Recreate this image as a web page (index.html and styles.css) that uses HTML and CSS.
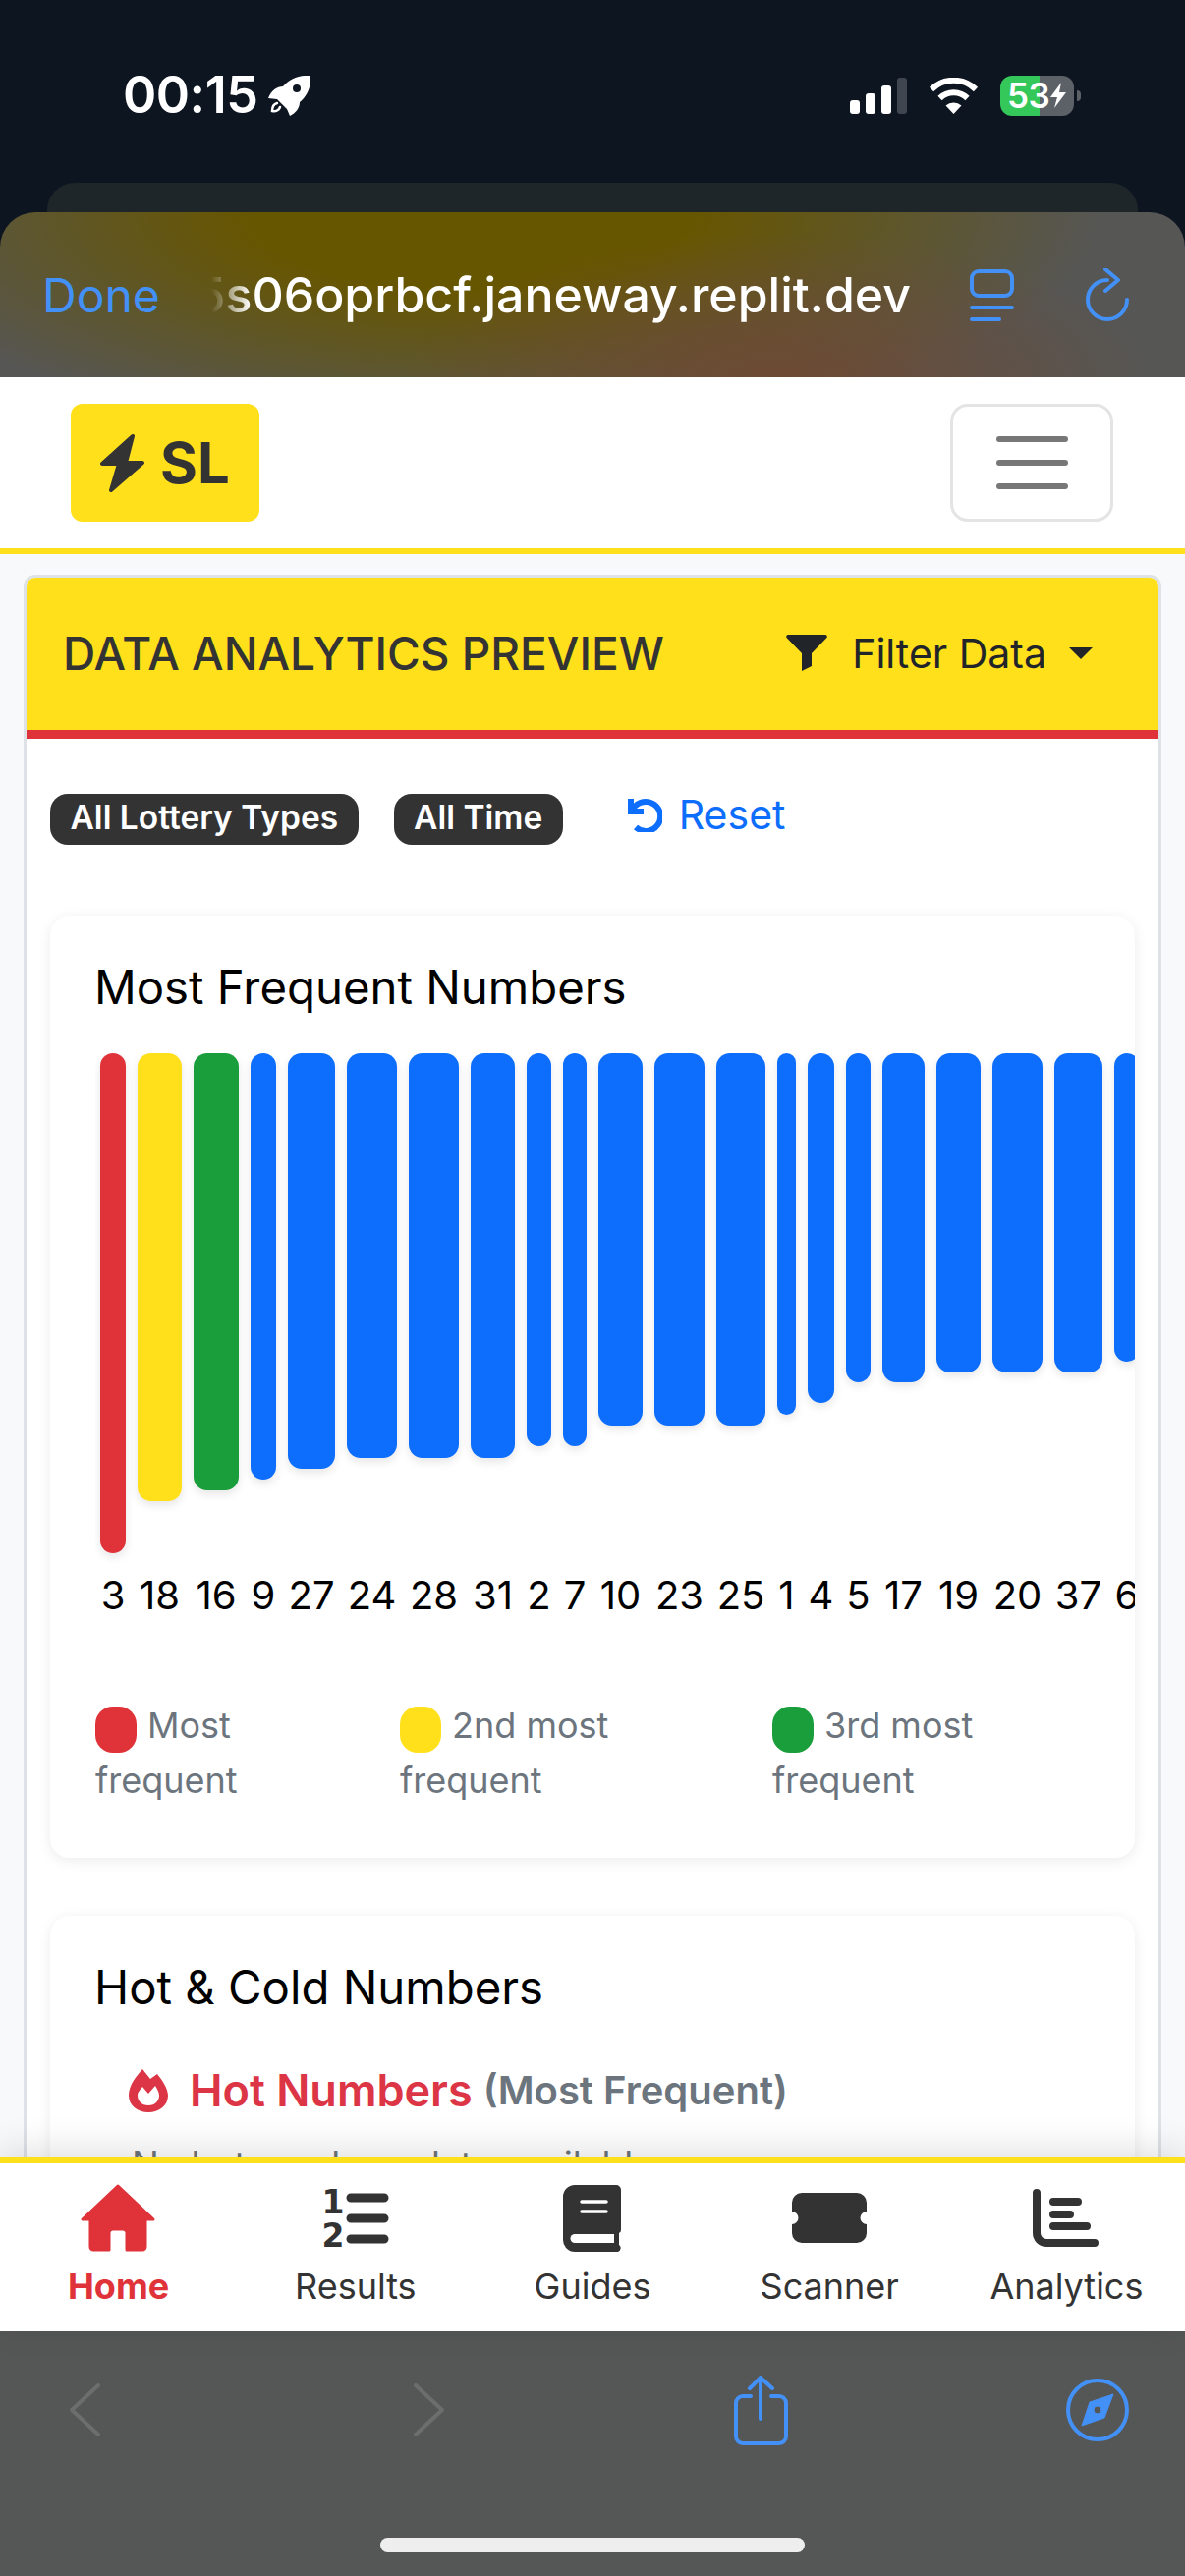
FILE: index.html
```html
<!DOCTYPE html>
<html lang="en">
<head>
    <meta charset="UTF-8">
    <meta name="viewport" content="width=device-width, initial-scale=1.0">
    <title>SL - Data Analytics Preview</title>
    <link rel="stylesheet" href="styles.css">
</head>
<body>

<!-- iOS status bar -->
<div class="status-bar">
    <div class="status-left">
        <span class="clock">00:15</span>
        <svg class="rocket" viewBox="0 0 43 41"><path fill-rule="evenodd" fill="#fff" d="M43 0C31-1 22 3 15 11 9 11 3 15 0 23L9 24 19 34 22 41C28 38 32 33 32 27 40 20 44 11 43 0ZM29 9a4 4 0 1 1 0 8 4 4 0 0 1 0-8Z"/><path fill="none" stroke="#fff" stroke-width="2.500" stroke-linecap="round" d="M9 28C5 29 4 32 4 36 8 37 11 35 12 32"/></svg>
    </div>
    <div class="status-right">
        <svg class="signal" viewBox="0 0 58 37">
            <rect x="0" y="23" width="10" height="14" rx="3" fill="#fff"/>
            <rect x="16" y="16" width="10" height="21" rx="3" fill="#fff"/>
            <rect x="32" y="8" width="10" height="29" rx="3" fill="#fff"/>
            <rect x="48" y="0" width="10" height="37" rx="3" fill="#3f464f"/>
        </svg>
        <svg class="wifi" viewBox="0 0 51 37">
            <path fill="none" stroke="#fff" stroke-width="6" d="M3 12A32 32 0 0 1 48 12M11.500 21A20 20 0 0 1 39.500 21"/>
            <path fill="#fff" d="M25.500 37 17.500 28.500A12 12 0 0 1 33.500 28.500Z"/>
        </svg>
        <div class="battery">
            <span>53</span>
            <svg class="battery-bolt" viewBox="0 0 16 26"><path fill="#fff" d="M11 0 0 15H7L4 26 16 10H9Z"/></svg>
        </div>
        <span class="battery-nub"></span>
    </div>
</div>
<div class="back-sheet"></div>

<!-- Safari sheet header -->
<div class="sheet-head">
    <span class="done">Done</span>
    <div class="url"><span>5s06oprbcf.janeway.replit.dev</span></div>
    <svg class="tabs-icon" viewBox="0 0 45 53">
        <rect x="2" y="2" width="41" height="25" rx="7" fill="none" stroke="#4390f7" stroke-width="4"/>
        <rect x="0" y="37" width="45" height="4" rx="2" fill="#4390f7"/>
        <rect x="0" y="49" width="32" height="4" rx="2" fill="#4390f7"/>
    </svg>
    <svg class="reload-icon" viewBox="0 0 44 54">
        <path fill="none" stroke="#4390f7" stroke-width="4" stroke-linecap="round" stroke-linejoin="round" d="M42 32A20 20 0 1 1 22 12M20 1 33 12 20 23"/>
    </svg>
</div>

<!-- site navbar -->
<nav class="navbar">
    <div class="logo">
        <svg class="logo-bolt" viewBox="0 0 45 61"><path fill="#333" stroke="#333" stroke-width="4" stroke-linejoin="round" d="M33 3 2 31H19L11 58 43 30H26Z"/></svg>
        <span>SL</span>
    </div>
    <div class="toggler">
        <i></i><i></i><i></i>
    </div>
</nav>

<main class="page">
    <section class="panel">
        <div class="panel-head">
            <h1>DATA ANALYTICS PREVIEW</h1>
            <div class="filter-btn">
                <svg class="funnel" viewBox="0 0 42 37"><path fill="#212529" d="M2 0H40A2 2 0 0 1 41.500 3L26 19V32L16 37V19L.5 3A2 2 0 0 1 2 0Z"/></svg>
                <span>Filter Data</span>
                <i class="caret"></i>
            </div>
        </div>
        <div class="panel-body">
            <div class="filters">
                <span class="badge">All Lottery Types</span>
                <span class="badge">All Time</span>
                <a class="reset">
                    <svg class="reset-icon" viewBox="0 0 37 36"><path fill="none" stroke="#0d6efd" stroke-width="6" d="M5 2V15H18M6 15A15 15 0 1 1 10 31"/></svg>
                    Reset
                </a>
            </div>

            <div class="card">
                <h2>Most Frequent Numbers</h2>
                <div class="chart">
                    <div class="col" style="width:26px"><div class="track"><div class="bar red" style="height:509px"></div></div><span>3</span></div>
                    <div class="col" style="width:45px"><div class="track"><div class="bar yellow" style="height:456px"></div></div><span>18</span></div>
                    <div class="col" style="width:46px"><div class="track"><div class="bar green" style="height:445px"></div></div><span>16</span></div>
                    <div class="col" style="width:26px"><div class="track"><div class="bar" style="height:434px"></div></div><span>9</span></div>
                    <div class="col" style="width:48px"><div class="track"><div class="bar" style="height:423px"></div></div><span>27</span></div>
                    <div class="col" style="width:51px"><div class="track"><div class="bar" style="height:412px"></div></div><span>24</span></div>
                    <div class="col" style="width:51px"><div class="track"><div class="bar" style="height:412px"></div></div><span>28</span></div>
                    <div class="col" style="width:45px"><div class="track"><div class="bar" style="height:412px"></div></div><span>31</span></div>
                    <div class="col" style="width:25px"><div class="track"><div class="bar" style="height:400px"></div></div><span>2</span></div>
                    <div class="col" style="width:24px"><div class="track"><div class="bar" style="height:400px"></div></div><span>7</span></div>
                    <div class="col" style="width:45px"><div class="track"><div class="bar" style="height:379px"></div></div><span>10</span></div>
                    <div class="col" style="width:51px"><div class="track"><div class="bar" style="height:379px"></div></div><span>23</span></div>
                    <div class="col" style="width:50px"><div class="track"><div class="bar" style="height:379px"></div></div><span>25</span></div>
                    <div class="col" style="width:19px"><div class="track"><div class="bar" style="height:368px"></div></div><span>1</span></div>
                    <div class="col" style="width:27px"><div class="track"><div class="bar" style="height:356px"></div></div><span>4</span></div>
                    <div class="col" style="width:25px"><div class="track"><div class="bar" style="height:335px"></div></div><span>5</span></div>
                    <div class="col" style="width:43px"><div class="track"><div class="bar" style="height:335px"></div></div><span>17</span></div>
                    <div class="col" style="width:45px"><div class="track"><div class="bar" style="height:325px"></div></div><span>19</span></div>
                    <div class="col" style="width:51px"><div class="track"><div class="bar" style="height:325px"></div></div><span>20</span></div>
                    <div class="col" style="width:49px"><div class="track"><div class="bar" style="height:325px"></div></div><span>37</span></div>
                    <div class="col" style="width:26px"><div class="track"><div class="bar" style="height:314px"></div></div><span>6</span></div>
                </div>
                <div class="legend">
                    <div><i class="dot red"></i>Most<br>frequent</div>
                    <div><i class="dot yellow"></i>2nd most<br>frequent</div>
                    <div><i class="dot green"></i>3rd most<br>frequent</div>
                </div>
            </div>

            <div class="card card-hot">
                <h2>Hot &amp; Cold Numbers</h2>
                <div class="hot-head">
                    <svg class="flame" viewBox="0 0 40 44"><path fill="#dc3545" fill-rule="evenodd" d="M14 0 22 10 29 5C34 11 40 20 40 27 40 37 31 44 20 44 9 44 0 37 0 27 0 16 8 7 14 0ZM20 37C27 37 31 32 31 27 31 24 29 20 27 17L20 25 14 18C12 21 9 23 9 27 9 32 13 37 20 37Z"/></svg>
                    <strong>Hot Numbers</strong>
                    <small>(Most Frequent)</small>
                </div>
                <p class="empty">No hot numbers data available</p>
            </div>
        </div>
    </section>
</main>

<!-- bottom tabs of the site -->
<nav class="tabbar">
    <a class="tab active">
        <svg viewBox="0 0 80 70"><path fill="#e03239" stroke="#e03239" stroke-width="3" stroke-linejoin="round" d="M39 2 3 36H11V64A3 3 0 0 0 14 67H30V50A4 4 0 0 1 34 46H44A4 4 0 0 1 48 50V67H64A3 3 0 0 0 67 64V36H75Z"/></svg>
        <span>Home</span>
    </a>
    <a class="tab">
        <svg viewBox="0 0 80 70">
            <text class="ol-num" x="17" y="30">1</text>
            <text class="ol-num" x="17" y="64">2</text>
            <path fill="none" stroke="#333" stroke-width="9" stroke-linecap="round" d="M35 14H69M35 35H69M35 56H69"/>
        </svg>
        <span>Results</span>
    </a>
    <a class="tab">
        <svg viewBox="0 0 80 70">
            <path fill="#333" d="M22 1H64A5 5 0 0 1 69 6V46A4 4 0 0 1 67 50V62A4 4 0 0 1 66 69H22A12 12 0 0 1 10 57V13A12 12 0 0 1 22 1Z"/>
            <path fill="#fff" d="M22 51H62V60H22A4.500 4.500 0 0 1 22 51Z"/>
            <path stroke="#fff" stroke-width="3.500" stroke-linecap="round" d="M29 18H54M29 28H54"/>
        </svg>
        <span>Guides</span>
    </a>
    <a class="tab">
        <svg viewBox="0 0 80 70"><path fill="#333" d="M12 9H68A10 10 0 0 1 78 19V28A6.500 6.500 0 0 0 78 41V50A10 10 0 0 1 68 60H12A10 10 0 0 1 2 50V41A6.500 6.500 0 0 0 2 28V19A10 10 0 0 1 12 9Z"/></svg>
        <span>Scanner</span>
    </a>
    <a class="tab">
        <svg viewBox="0 0 80 70"><path fill="none" stroke="#333" stroke-width="8" stroke-linecap="round" d="M10 9V50A10 10 0 0 0 20 60H69M27 18H52M27 31H44M27 43H61"/></svg>
        <span>Analytics</span>
    </a>
</nav>

<!-- Safari toolbar -->
<div class="toolbar">
    <div class="toolbar-row">
        <svg class="chev" viewBox="0 0 31 54"><path fill="none" stroke="#6c6e6d" stroke-width="4" stroke-linecap="round" stroke-linejoin="round" d="M29 2 2 27 29 52"/></svg>
        <svg class="chev chev-next" viewBox="0 0 31 54"><path fill="none" stroke="#6c6e6d" stroke-width="4" stroke-linecap="round" stroke-linejoin="round" d="M2 2 29 27 2 52"/></svg>
        <svg class="share" viewBox="0 0 55 71"><path fill="none" stroke="#4390f7" stroke-width="4" stroke-linecap="round" stroke-linejoin="round" d="M17 21H9A7 7 0 0 0 2 28V62A7 7 0 0 0 9 69H46A7 7 0 0 0 53 62V28A7 7 0 0 0 46 21H38M27 44V2M16 13 27 2 39 13"/></svg>
        <svg class="compass" viewBox="0 0 64 64">
            <circle cx="32" cy="32" r="30" fill="none" stroke="#4390f7" stroke-width="4"/>
            <path fill="#4390f7" fill-rule="evenodd" stroke="#4390f7" stroke-linejoin="round" d="M48 16 39 40 16 48 24 24ZM32 28a4 4 0 1 0 0 8 4 4 0 0 0 0-8Z"/>
        </svg>
    </div>
    <div class="home-bar"></div>
</div>

</body>
</html>
```

FILE: styles.css
```css
* {
    box-sizing: border-box;
}

body {
    margin: 0;
    width: 1206px;
    height: 2622px;
    overflow: hidden;
    display: flex;
    flex-direction: column;
    background-color: #0d1521;
    font-family: Inter, "Noto Sans", sans-serif;
    color: #000;
}

/* status bar */
.status-bar {
    height: 186px;
    padding: 76px 106px 0 125px;
    display: flex;
    justify-content: space-between;
    align-items: flex-start;
}

.status-left,
.status-right {
    display: flex;
    align-items: center;
    height: 42px;
}

.clock {
    color: #fff;
    font-size: 52px;
    font-weight: 600;
    letter-spacing: -0.5px;
    line-height: 42px;
}

.rocket {
    width: 43px;
    height: 41px;
    margin-left: 11px;
}

.signal {
    width: 58px;
    height: 37px;
}

.wifi {
    width: 51px;
    height: 37px;
    margin-left: 22px;
}

.battery {
    width: 75px;
    height: 41px;
    margin-left: 22px;
    padding-left: 7px;
    border-radius: 12px;
    background: linear-gradient(90deg, #34c759 40px, #5c6168 40px);
    display: flex;
    align-items: center;
    color: #fff;
    font-size: 35px;
    font-weight: 600;
    letter-spacing: -0.5px;
}

.battery-bolt {
    width: 16px;
    height: 26px;
    margin-left: 1px;
}

.battery-nub {
    width: 4px;
    height: 11px;
    margin-left: 3px;
    border-radius: 0 4px 4px 0;
    background: #5c6168;
}

.back-sheet {
    height: 30px;
    margin: 0 48px;
    background: #1e2629;
    border-radius: 28px 28px 0 0;
}

/* safari head */
.sheet-head {
    height: 168px;
    border-radius: 36px 36px 0 0;
    padding-left: 43px;
    display: flex;
    align-items: center;
    background:
        radial-gradient(ellipse 380px 150px at 790px 170px, #6e4a33, rgba(110, 74, 51, 0) 100%),
        radial-gradient(ellipse 640px 230px at 480px 0, #675600 35%, rgba(103, 86, 0, 0) 100%),
        #565654;
    color: #fff;
    font-size: 50px;
}

.done {
    width: 172px;
    color: #4390f7;
    font-size: 48px;
}

.url {
    width: 712px;
    overflow: hidden;
    display: flex;
    justify-content: flex-end;
    font-weight: 500;
    white-space: nowrap;
    -webkit-mask-image: linear-gradient(90deg, transparent 0, #000 40px);
    mask-image: linear-gradient(90deg, transparent 0, #000 40px);
}

.tabs-icon {
    width: 45px;
    height: 53px;
    margin-left: 60px;
}

.reload-icon {
    width: 44px;
    height: 54px;
    margin-left: 73px;
}

/* navbar */
.navbar {
    height: 180px;
    padding: 27px 73px 0 72px;
    background: #fff;
    border-bottom: 6px solid #ffe01b;
    display: flex;
    justify-content: space-between;
    align-items: flex-start;
}

.logo {
    width: 192px;
    height: 120px;
    padding-left: 30px;
    border-radius: 12px;
    background: #ffe01b;
    display: flex;
    align-items: center;
    color: #333;
    font-size: 58px;
    font-weight: 700;
}

.logo-bolt {
    width: 45px;
    height: 61px;
    margin-right: 16px;
}

.toggler {
    width: 166px;
    height: 120px;
    border: 3px solid #e4e4e4;
    border-radius: 18px;
    display: flex;
    flex-direction: column;
    align-items: center;
    justify-content: center;
    gap: 18px;
}

.toggler i {
    width: 73px;
    height: 6px;
    border-radius: 3px;
    background: #777;
}

/* page */
.page {
    height: 1632px;
    padding: 21px 24px 0;
    background: #f8f9fa;
    overflow: hidden;
}

.panel {
    background: #fff;
    border: 3px solid #dee2e6;
    border-radius: 12px;
}

.panel-head {
    height: 164px;
    padding: 0 67px 2px 37px;
    background: #ffe01b;
    border-bottom: 9px solid #e03239;
    border-radius: 9px 9px 0 0;
    display: flex;
    align-items: center;
    justify-content: space-between;
}

.panel-head h1 {
    margin: 0;
    font-size: 46px;
    font-weight: 500;
    color: #333;
}

.filter-btn {
    display: flex;
    align-items: center;
    font-size: 41px;
    color: #212529;
}

.funnel {
    width: 42px;
    height: 37px;
    margin-right: 25px;
}

.caret {
    width: 0;
    height: 0;
    margin-left: 23px;
    border-top: 12px solid #212529;
    border-left: 12px solid transparent;
    border-right: 12px solid transparent;
}

.panel-body {
    padding: 56px 24px 0;
}

.filters {
    display: flex;
    align-items: flex-start;
    gap: 36px;
    margin-bottom: 72px;
}

.badge {
    height: 52px;
    padding: 0 20.500px;
    border-radius: 18px;
    background: #333;
    color: #fff;
    font-size: 33.500px;
    font-weight: 600;
    line-height: 48px;
}

.reset {
    display: flex;
    align-items: center;
    margin-left: 28px;
    color: #0d6efd;
    font-size: 41px;
    line-height: 42px;
}

.reset-icon {
    width: 37px;
    height: 36px;
    margin-right: 17px;
}

.card {
    height: 959px;
    padding: 45px 46px 0;
    background: #fff;
    border-radius: 20px;
    box-shadow: 0 3px 14px rgba(0, 0, 0, 0.08);
}

.card h2 {
    margin: 0 0 0 -1px;
    font-size: 47.300px;
    font-weight: 400;
    line-height: 55px;
}

.chart {
    display: flex;
    gap: 12px;
    margin: 40px -46px 0 0;
    padding-left: 5px;
    overflow: hidden;
    padding-bottom: 10px;
}

.col {
    flex: none;
    font-size: 40px;
    line-height: 48px;
    text-align: center;
}

.track {
    height: 509px;
    margin-bottom: 19px;
}

.bar {
    width: 100%;
    border-radius: 14px;
    background: #0d6efd;
    box-shadow: 0 4px 10px rgba(0, 0, 0, 0.1);
}

.red {
    background: #e03239;
}

.yellow {
    background: #ffe01b;
}

.green {
    background: #1a9e3c;
}

.legend {
    display: grid;
    grid-template-columns: 310px 379px 1fr;
    margin-top: 70px;
    color: #6c757d;
    font-size: 36px;
    line-height: 56px;
}

.dot {
    display: inline-block;
    width: 42px;
    height: 47px;
    margin-right: 11px;
    border-radius: 18px;
    vertical-align: -15px;
}

.card-hot {
    margin-top: 59px;
}

.hot-head {
    display: flex;
    align-items: center;
    margin: 50px 0 0 34px;
    font-size: 45px;
}

.flame {
    width: 40px;
    height: 44px;
    margin-right: 22px;
}

.hot-head strong {
    font-weight: 600;
    color: #dc3545;
}

.hot-head small {
    margin-left: 11px;
    font-size: 40px;
    font-weight: 600;
    color: #6c757d;
}

.empty {
    margin: 25px 0 0 37px;
    color: #6c757d;
    font-size: 37px;
}

/* bottom tabs */
.tabbar {
    position: relative;
    height: 177px;
    padding-top: 21px;
    background: #fff;
    border-top: 6px solid #ffe01b;
    box-shadow: 0 -8px 34px rgba(0, 0, 0, 0.12);
    display: flex;
}

.tab {
    flex: 1;
    display: flex;
    flex-direction: column;
    align-items: center;
    color: #333;
    font-size: 36px;
    line-height: 42px;
}

.tab svg {
    width: 80px;
    height: 70px;
    margin-bottom: 13px;
}

.tab.active {
    color: #e03239;
    font-weight: 700;
}

.ol-num {
    fill: #333;
    font-family: "DejaVu Sans", sans-serif;
    font-size: 33px;
    font-weight: 700;
    text-anchor: middle;
}

/* safari toolbar */
.toolbar {
    flex: 1;
    background: #555756;
    padding-top: 44px;
}

.toolbar-row {
    height: 72px;
    padding-left: 71px;
    display: flex;
    align-items: center;
}

.chev {
    width: 31px;
    height: 54px;
}

.chev-next {
    margin-left: 319px;
}

.share {
    width: 55px;
    height: 71px;
    margin-left: 295px;
}

.compass {
    width: 64px;
    height: 64px;
    margin-left: 283px;
}

.home-bar {
    width: 432px;
    height: 15px;
    margin: 94px auto 0;
    border-radius: 8px;
    background: #eee;
}
```
